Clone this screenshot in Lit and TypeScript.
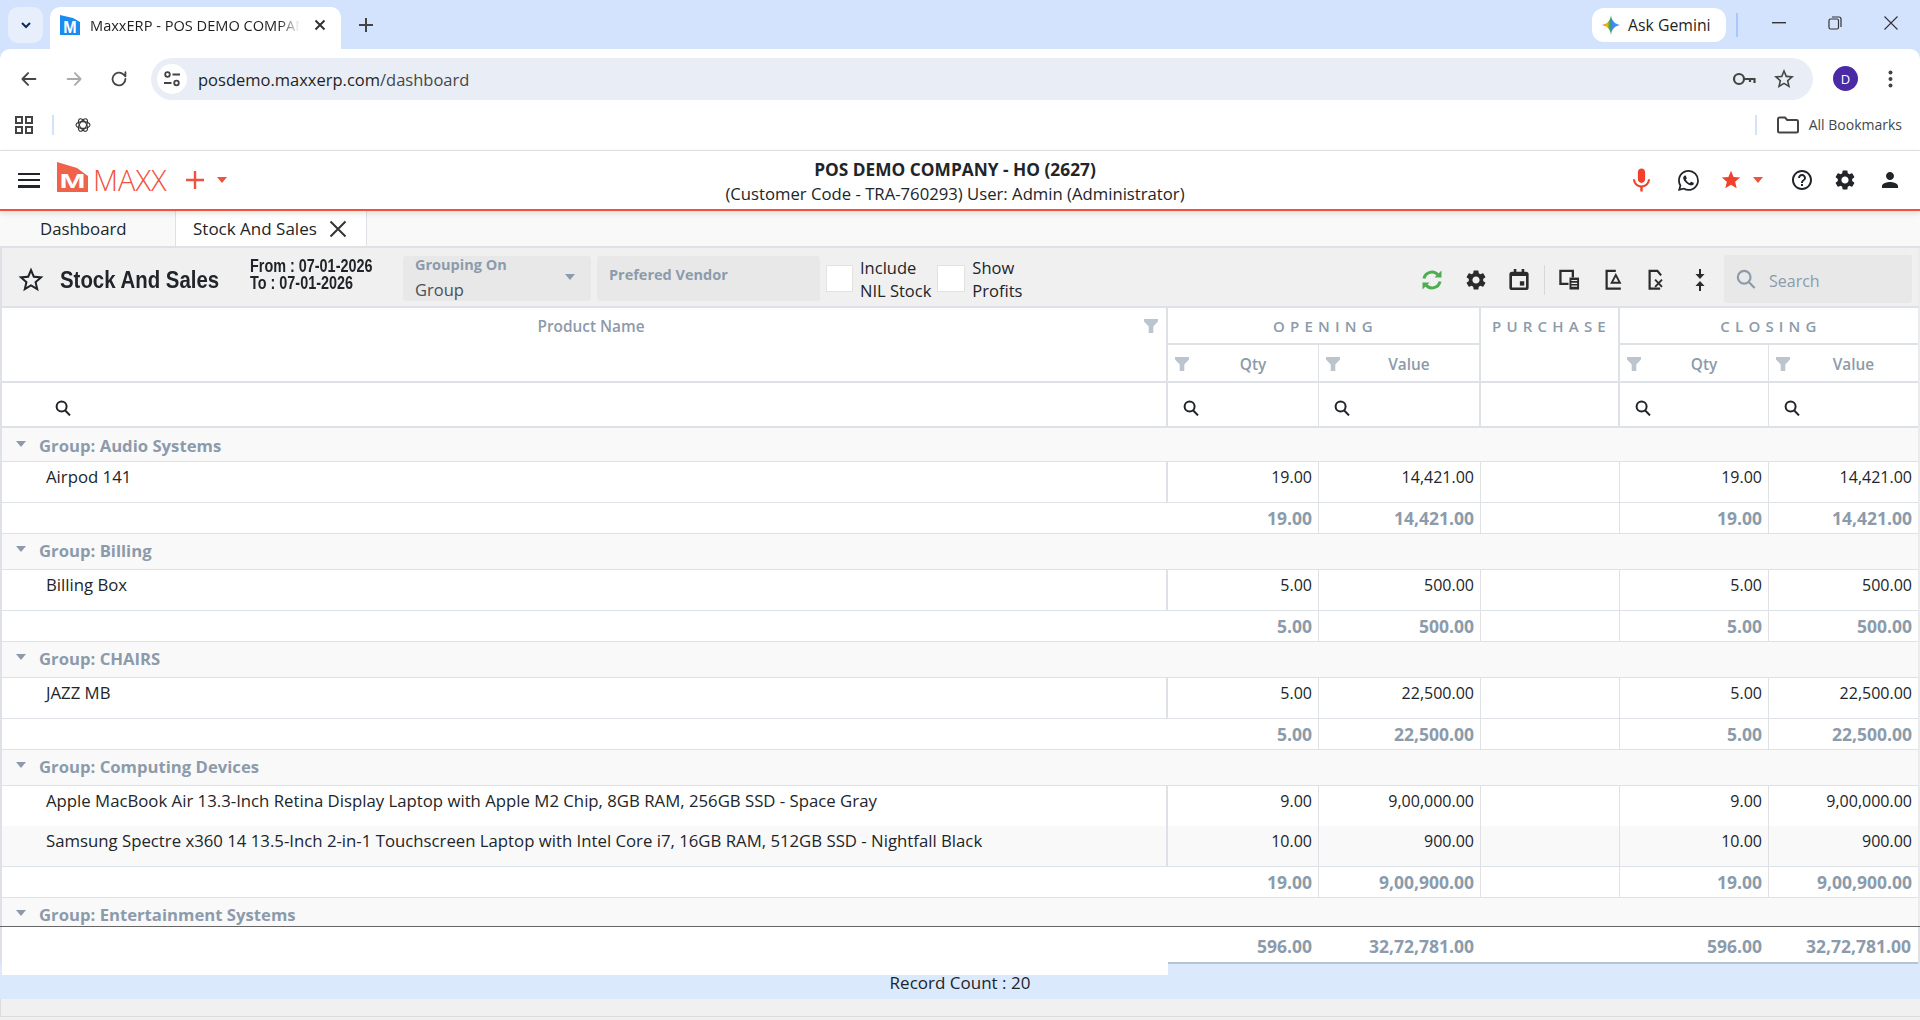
import { LitElement, html, css, svg } from "lit";
import { customElement } from "lit/decorators.js";

const P = {
  gear: "M19.14 12.94c.04-.3.06-.61.06-.94 0-.32-.02-.64-.07-.94l2.03-1.58c.18-.14.23-.41.12-.61l-1.92-3.32c-.12-.22-.37-.29-.59-.22l-2.39.96c-.5-.38-1.03-.7-1.62-.94l-.36-2.54c-.04-.24-.24-.41-.48-.41h-3.84c-.24 0-.43.17-.47.41l-.36 2.54c-.59.24-1.13.57-1.62.94l-2.39-.96c-.22-.08-.47 0-.59.22L2.74 8.87c-.12.21-.08.47.12.61l2.03 1.58c-.05.3-.09.63-.09.94s.02.64.07.94l-2.03 1.58c-.18.14-.23.41-.12.61l1.92 3.32c.12.22.37.29.59.22l2.39-.96c.5.38 1.03.7 1.62.94l.36 2.54c.05.24.24.41.48.41h3.84c.24 0 .44-.17.47-.41l.36-2.54c.59-.24 1.13-.56 1.62-.94l2.39.96c.22.08.47 0 .59-.22l1.92-3.32c.12-.22.07-.47-.12-.61l-2.01-1.58zM12 15.6c-1.98 0-3.6-1.62-3.6-3.6s1.62-3.6 3.6-3.6 3.6 1.62 3.6 3.6-1.62 3.6-3.6 3.6z",
  star: "M12 17.27L18.18 21l-1.64-7.03L22 9.24l-7.19-.61L12 2 9.19 8.63 2 9.24l5.46 4.73L5.82 21z",
  starO: "M22 9.24l-7.19-.62L12 2 9.19 8.63 2 9.24l5.46 4.73L5.82 21 12 17.27 18.18 21l-1.63-7.03L22 9.24zM12 15.4l-3.76 2.27 1-4.28-3.32-2.88 4.38-.38L12 6.1l1.71 4.04 4.38.38-3.32 2.88 1 4.28L12 15.4z",
  mic: "M12 14c1.66 0 2.99-1.34 2.99-3L15 5c0-1.66-1.34-3-3-3S9 3.34 9 5v6c0 1.66 1.34 3 3 3zm5.3-3c0 3-2.54 5.1-5.3 5.1S6.7 14 6.7 11H5c0 3.41 2.72 6.23 6 6.72V21h2v-3.28c3.28-.48 6-3.3 6-6.72h-1.7z",
  help: "M11 18h2v-2h-2v2zm1-16C6.48 2 2 6.48 2 12s4.48 10 10 10 10-4.48 10-10S17.52 2 12 2zm0 18c-4.41 0-8-3.59-8-8s3.59-8 8-8 8 3.59 8 8-3.59 8-8 8zm0-14c-2.21 0-4 1.79-4 4h2c0-1.1.9-2 2-2s2 .9 2 2c0 2-3 1.75-3 5h2c0-2.25 3-2.5 3-5 0-2.21-1.79-4-4-4z",
  person: "M12 12c2.21 0 4-1.79 4-4s-1.79-4-4-4-4 1.79-4 4 1.79 4 4 4zm0 2c-2.67 0-8 1.34-8 4v2h16v-2c0-2.66-5.33-4-8-4z",
  whatsapp: "M13.601 2.326A7.854 7.854 0 0 0 7.994 0C3.627 0 .068 3.558.064 7.926c0 1.399.366 2.76 1.057 3.965L0 16l4.204-1.102a7.933 7.933 0 0 0 3.79.965h.004c4.368 0 7.926-3.558 7.93-7.93A7.898 7.898 0 0 0 13.6 2.326zM7.994 14.521a6.573 6.573 0 0 1-3.356-.92l-.24-.144-2.494.654.666-2.433-.156-.251a6.56 6.56 0 0 1-1.007-3.505c0-3.626 2.957-6.584 6.591-6.584a6.56 6.56 0 0 1 4.66 1.931 6.557 6.557 0 0 1 1.928 4.66c-.004 3.639-2.961 6.592-6.592 6.592zm3.615-4.934c-.197-.099-1.17-.578-1.353-.646-.182-.065-.315-.099-.445.099-.133.197-.513.646-.627.775-.114.133-.232.148-.43.05-.197-.1-.836-.308-1.592-.985-.59-.525-.985-1.175-1.103-1.372-.114-.198-.011-.304.088-.403.087-.088.197-.232.296-.346.1-.114.133-.198.198-.33.065-.134.034-.248-.015-.347-.05-.099-.445-1.076-.612-1.47-.16-.389-.323-.335-.445-.34-.114-.007-.247-.007-.38-.007a.729.729 0 0 0-.529.247c-.182.198-.691.677-.691 1.654 0 .977.71 1.916.81 2.049.098.133 1.394 2.132 3.383 2.992.47.205.84.326 1.129.418.475.152.904.129 1.246.08.38-.058 1.171-.48 1.338-.943.164-.464.164-.86.114-.943-.049-.084-.182-.133-.38-.232z",
};

const icon = (d: string, size: number, color = "#212529", box = 24) =>
  html`<svg width=${size} height=${size} viewBox="0 0 ${box} ${box}"><path d=${d} fill=${color}></path></svg>`;

const arrow = (d: string, color: string) =>
  html`<svg width="22" height="22" viewBox="0 0 24 24" fill="none" stroke=${color} stroke-width="2" stroke-linecap="round" stroke-linejoin="round">${svg`<path d=${d}></path>`}</svg>`;

const funnel = html`<svg class="fn" width="14" height="14" viewBox="0 0 14 14"><path d="M0 0h14v2.5L9.3 7.5V14H4.7V7.5L0 2.5z" fill="#bcc5ce"></path></svg>`;
const lens = html`<svg width="16" height="16" viewBox="0 0 16 16" fill="none" stroke="#212529" stroke-width="2"><circle cx="6.6" cy="6.4" r="5"></circle><path d="M10 10.2l5 5.2"></path></svg>`;

type Item = { name: string; oq: string; ov: string };
type Group = { name: string; items: Item[]; sq: string; sv: string };

const GROUPS: Group[] = [
  { name: "Audio Systems", items: [{ name: "Airpod 141", oq: "19.00", ov: "14,421.00" }], sq: "19.00", sv: "14,421.00" },
  { name: "Billing", items: [{ name: "Billing Box", oq: "5.00", ov: "500.00" }], sq: "5.00", sv: "500.00" },
  { name: "CHAIRS", items: [{ name: "JAZZ MB", oq: "5.00", ov: "22,500.00" }], sq: "5.00", sv: "22,500.00" },
  {
    name: "Computing Devices",
    items: [
      { name: "Apple MacBook Air 13.3-Inch Retina Display Laptop with Apple M2 Chip, 8GB RAM, 256GB SSD - Space Gray", oq: "9.00", ov: "9,00,000.00" },
      { name: "Samsung Spectre x360 14 13.5-Inch 2-in-1 Touchscreen Laptop with Intel Core i7, 16GB RAM, 512GB SSD - Nightfall Black", oq: "10.00", ov: "900.00" },
    ],
    sq: "19.00",
    sv: "9,00,900.00",
  },
  { name: "Entertainment Systems", items: [], sq: "", sv: "" },
];

@customElement("app-root")
export class AppRoot extends LitElement {
  static styles = css`
    :host {
      display: block;
      width: 1920px;
      height: 1020px;
      overflow: hidden;
      background: #f0f0f0;
      font-family: "Open Sans", "Noto Sans", sans-serif;
      font-size: 16px;
      color: #212529;
    }
    svg { display: block; flex: none; }
    .center { display: flex; align-items: center; justify-content: center; flex: none; }
    .fill { flex: 1; }

    /* browser chrome */
    .chrome { background: #d3e3fd; }
    .strip { height: 49px; display: flex; align-items: flex-start; padding-top: 7px; box-sizing: border-box; }
    .tab-list { width: 35px; height: 36px; margin-left: 8px; border-radius: 10px; background: #e8effc; }
    .b-tab { width: 291px; height: 42px; margin-left: 7px; background: #fff; border-radius: 10px 10px 0 0; display: flex; align-items: center; padding: 0 0 6px 10px; box-sizing: border-box; }
    .b-tab .t { width: 210px; margin-left: 10px; font-size: 14.6px; white-space: nowrap; overflow: hidden; color: #1f1f1f; -webkit-mask-image: linear-gradient(90deg, #000 90%, transparent); mask-image: linear-gradient(90deg, #000 90%, transparent); }
    .b-tab .x { width: 20px; margin-left: 10px; }
    .new-tab { margin-left: 13px; width: 24px; height: 35px; }
    .gemini { width: 134px; height: 34px; margin-top: 1px; background: #fff; border-radius: 12px; display: flex; align-items: center; gap: 7px; padding-left: 9px; box-sizing: border-box; font-size: 15.8px; font-weight: 500; color: #1f1f1f; }
    .v-div { width: 2px; height: 24px; background: #a8c7fa; margin: 6px 0 0 10px; }
    .win { width: 56px; height: 32px; }
    .win.first { margin-left: 13px; }
    .win.last { margin-right: 1px; }

    .address { height: 51px; background: #fff; display: flex; align-items: flex-start; padding-top: 9px; box-sizing: border-box; border-radius: 10px 10px 0 0; }
    .nav { width: 45px; height: 42px; }
    .nav.first { margin-left: 6px; }
    .omni { flex: none; width: 1662px; height: 42px; margin-left: 10px; border-radius: 21px; background: #e9eef6; display: flex; align-items: center; box-sizing: border-box; padding-left: 6px; }
    .site { width: 30px; height: 30px; border-radius: 50%; background: #fff; }
    .url { margin-left: 11px; font-size: 16.5px; color: #1f1f1f; }
    .url i { font-style: normal; color: #444746; }
    .omni .act { width: 40px; }
    .omni .act.last { margin-right: 9px; }
    .avatar { width: 25px; height: 25px; border-radius: 50%; background: #4a2aa5; color: #fff; font-size: 13px; margin: 8px 0 0 20px; }
    .dots { margin: 12px 0 0 30px; }

    .bookmarks { background: #fff; border-bottom: 1px solid #e4e4e4; box-sizing: border-box; height: 51px; display: flex; align-items: center; }
    .bookmarks .apps { margin-left: 15px; }
    .bookmarks .sep { width: 2px; height: 20px; background: #d3e3fd; }
    .bookmarks .sep.a { margin-left: 19px; }
    .bookmarks .gpt { margin-left: 21px; }
    .bookmarks .folder { margin-left: 20px; }
    .bookmarks .all { font-size: 14px; color: #444746; margin: 0 18px 2px 10px; }

    /* app header */
    .head { height: 60px; box-sizing: border-box; background: #fff; display: grid; grid-template-columns: 1fr auto 1fr; align-items: center; padding-right: 10px; border-bottom: 2px solid #f0523d; position: relative; z-index: 1; box-shadow: 0 2px 6px rgba(0, 0, 0, .12); }
    .h-left, .h-icons { display: flex; align-items: center; }
    .burger { width: 22px; height: 15px; margin-left: 18px; display: flex; flex-direction: column; justify-content: space-between; }
    .burger b { display: block; height: 2.5px; background: #212529; }
    .logo { margin: 0 0 6px 17px; position: relative; width: 112px; height: 31px; display: flex; align-items: flex-end; }
    .logo svg { position: absolute; left: 0; top: 0; }
    .logo span { margin-left: 36px; font-size: 29px; line-height: 26px; font-weight: 300; color: #f0523d; }
    .plus { margin-left: 16px; }
    .caret { width: 0; height: 0; border: 5.5px solid transparent; border-top: 6px solid #f0523d; border-bottom: 0; }
    .caret.a { margin-left: 12px; }
    .titles { text-align: center; line-height: 24px; font-size: 16.7px; margin-top: 3px; }
    .titles b { display: block; font-weight: 700; font-size: 17.3px; }
    .h-icons { justify-content: flex-end; padding-right: 8px; }
    .h-icons .wa { margin-left: 22px; }
    .h-icons .st { margin-left: 21px; }
    .h-icons .caret { margin-left: 11px; }
    .h-icons .he { margin-left: 27px; }
    .h-icons .ge { margin-left: 19px; }
    .h-icons .us { margin-left: 21px; }

    /* tabs */
    .tabs { height: 37px; box-sizing: border-box; background: #f9f9f9; display: flex; border-bottom: 2px solid #dee2e6; }
    .tabs > div { display: flex; align-items: center; box-sizing: border-box; }
    .tab-a { width: 176px; padding-left: 40px; border-right: 1px solid #dee2e6; font-size: 16.8px; }
    .tab-b { width: 191px; padding-left: 17px; background: #fff; border-right: 1px solid #dee2e6; gap: 12px; font-size: 17px; }

    /* toolbar */
    .bar { height: 60px; box-sizing: border-box; padding-top: 3px; background: #f0f0f0; border-left: 2px solid #dee2e6; border-bottom: 2px solid #dee2e6; border-right: 2px solid #e9ecef; display: flex; align-items: center; }
    .bar .star { margin: 2px 0 0 14px; }
    .bar h1 { margin: 2px 0 0 14px; font: 700 24px/30px "Liberation Sans", sans-serif; transform: scaleX(.85); transform-origin: 0 50%; white-space: nowrap; width: 158px; }
    .dates { margin: -8px 0 0 32px; font: 700 18px/17px "Liberation Sans", sans-serif; transform: scaleX(.8); transform-origin: 0 50%; white-space: nowrap; width: 153px; }
    .field { height: 45px; background: #e8e8e8; border-radius: 3px; box-sizing: border-box; position: relative; padding: 0 12px; }
    .field.grp { width: 188px; }
    .field.ven { width: 223px; margin-left: 6px; padding-top: 10px; }
    .field label { display: block; font-weight: 700; font-size: 14.5px; line-height: 17px; color: #8c9bab; }
    .field span { display: block; font-size: 16.5px; line-height: 24px; margin-top: 5px; color: #495057; }
    .field .arrow { position: absolute; right: 16px; top: 18px; width: 0; height: 0; border: 5.5px solid transparent; border-top: 6px solid #8c9bab; border-bottom: 0; }
    .check { width: 27px; height: 27px; background: #fff; border: 1px solid #e2e2e2; box-sizing: border-box; margin-left: 6px; }
    .check.b { width: 28px; }
    .check-label { font-size: 16.5px; line-height: 23px; margin-left: 7px; }
    .tool { width: 43.5px; margin-top: 2px; }
    .tool-sep { width: 1px; height: 30px; margin: 2px 3px 0; background: #d8d8d8; }
    .box { width: 188px; height: 48px; margin: 0 6px 0 2px; background: #e8e8e8; border-radius: 3px; display: flex; align-items: center; padding-left: 12px; box-sizing: border-box; gap: 13px; color: #8c9bab; font-size: 16px; }
    .box em { font-style: normal; margin-top: 4px; }

    /* table */
    .table { border-left: 2px solid #dee2e6; border-right: 2px solid #e9ecef; background: #fff; }
    .cols { display: grid; grid-template-columns: 1166px 151px 162px 139px 149px 149px; }
    .thead { grid-template-rows: 37px 38px 45px; color: #8c9bab; font-weight: 600; font-size: 15.4px; border-bottom: 2px solid #dee2e6; box-sizing: border-box; height: 120px; }
    .thead > div { display: flex; align-items: center; justify-content: center; position: relative; box-sizing: border-box; border-right: 2px solid #dee2e6; border-bottom: 2px solid #dee2e6; }
    .thead .thin { border-right-width: 1px; }
    .thead .none { border-right: 0; }
    .thead .band { letter-spacing: 5.2px; font-size: 15px; padding-left: 4px; }
    .thead .wide { grid-column: span 2; }
    .thead .pn { grid-row: span 2; align-items: flex-start; padding: 8px 0 0 14px; }
    .thead .pn .fn { position: absolute; right: 8px; top: 11px; }
    .thead .sub { padding: 3px 0 0 20px; }
    .thead .sub .fn { position: absolute; left: 7px; top: 12px; }
    .thead .lens { justify-content: flex-start; border-bottom: 0; padding: 4px 0 0 15px; }
    .thead .lens.p { padding-left: 53px; }
    .thead .pu { grid-row: span 2; align-items: flex-start; padding-top: 8px; }
    .body { height: 498px; overflow: hidden; }
    .group { height: 36px; background: #f9f9f9; border-bottom: 1px solid #dee2e6; box-sizing: border-box; display: flex; align-items: center; padding: 0 0 2px 14px; gap: 13px; color: #8c9bab; font-weight: 700; font-size: 16.7px; }
    .group.first { height: 34px; padding: 1px 0 0 14px; }
    .group i { width: 0; height: 0; border: 5.5px solid transparent; border-top: 6px solid #8c9bab; border-bottom: 0; margin-bottom: 3px; }
    .row > div { height: 40px; box-sizing: border-box; padding: 0 6px; line-height: 30px; font-size: 16px; text-align: right; border-right: 1px solid #dee2e6; }
    .row > div:first-child { text-align: left; font-size: 16.76px; padding-left: 44px; border-right: 2px solid #dee2e6; }
    .row > div:last-child { border-right: 0; }
    .row.alt > div { background: #f9f9f9; }
    .row.end > div { height: 41px; border-bottom: 1px solid #dee2e6; }
    .sub-total > div { height: 31px; box-sizing: border-box; padding: 0 6px; line-height: 30px; font-size: 17.5px; text-align: right; font-weight: 700; color: #8c9bab; border-right: 1px solid #dee2e6; border-bottom: 1px solid #dee2e6; }
    .sub-total > div:first-child { grid-column: span 2; }
    .sub-total > div:last-child { border-right: 0; }
    .foot { display: grid; grid-template-columns: 2px 1166px 151px 162px 139px 149px 149px 2px; background: #dbe9fd; border-top: 1px solid #666; align-items: start; }
    .foot > div { height: 37px; background: #fff; box-sizing: border-box; border-bottom: 2px solid #b9c3cf; padding: 3px 7px 0; line-height: 32px; font-size: 17.5px; text-align: right; font-weight: 700; color: #8c9bab; }
    .foot > div.wide { height: 48px; border-bottom: 0; }
    .foot > div.edge { padding: 0; border: 0; background: #dee2e6; }
    .count { height: 24px; background: #dbe9fd; line-height: 16px; text-align: center; font-size: 17px; font-weight: 500; }
    .status { height: 17px; border-bottom: 1px solid #dcdcdc; border-left: 1px solid #dcdcdc; background: #f0f0f0; }
  `;

  private renderChrome() {
    return html`
      <div class="chrome">
        <div class="strip">
          <div class="tab-list center">
            <svg width="14" height="14" viewBox="0 0 14 14" fill="none" stroke="#0b2a5c" stroke-width="2"><path d="M3 5l4 4 4-4"></path></svg>
          </div>
          <div class="b-tab">
            <svg width="20" height="20" viewBox="0 0 20 20"><path d="M0 0 L13 3 L20 7 V20 H0z" fill="#1a8cef"></path><text x="10" y="18" text-anchor="middle" fill="#fff" font-family="Liberation Sans" font-weight="700" font-size="16">M</text></svg>
            <div class="t">MaxxERP - POS DEMO COMPANY - HO</div>
            <div class="x center">
              <svg width="12" height="12" viewBox="0 0 12 12" stroke="#333" stroke-width="2"><path d="M1.5 1.5l9 9M10.5 1.5l-9 9"></path></svg>
            </div>
          </div>
          <div class="new-tab center">
            <svg width="14" height="14" viewBox="0 0 14 14" stroke="#444" stroke-width="2"><path d="M7 0v14M0 7h14"></path></svg>
          </div>
          <div class="fill"></div>
          <div class="gemini">
            <svg width="20" height="22" viewBox="0 0 24 24">
              <defs><linearGradient id="gem" x1="0" y1="0" x2="1" y2="0"><stop offset="0" stop-color="#ea4335"></stop><stop offset=".3" stop-color="#fbbc04"></stop><stop offset=".45" stop-color="#34a853"></stop><stop offset=".55" stop-color="#4285f4"></stop><stop offset="1" stop-color="#3c9bff"></stop></linearGradient></defs>
              <path d="M12 0C12.6 7 17 11.4 24 12 17 12.6 12.6 17 12 24 11.4 17 7 12.6 0 12 7 11.4 11.4 7 12 0z" fill="url(#gem)"></path>
            </svg>
            Ask Gemini
          </div>
          <div class="v-div"></div>
          <div class="win first center"><svg width="14" height="2"><rect width="14" height="1.4" fill="#333"></rect></svg></div>
          <div class="win center">
            <svg width="14" height="14" viewBox="0 0 14 14" fill="none" stroke="#333" stroke-width="1.2"><rect x="1" y="3" width="9.5" height="10" rx="1.5"></rect><path d="M4 1h7a2 2 0 0 1 2 2v8"></path></svg>
          </div>
          <div class="win last center">
            <svg width="14" height="14" viewBox="0 0 14 14" stroke="#333" stroke-width="1.1"><path d="M.5.5l13 13M13.5.5l-13 13"></path></svg>
          </div>
        </div>
        <div class="address">
          <div class="nav first center">${arrow("M19 12H5M11 5.5L4.8 12l6.2 6.5", "#444746")}</div>
          <div class="nav center">${arrow("M5 12h14M13 5.5l6.2 6.5-6.2 6.5", "#a9abae")}</div>
          <div class="nav center">${arrow("M19 12a7 7 0 1 1-2.2-5.1L19 9V4.5", "#444746")}</div>
          <div class="omni">
            <div class="site center">
              <svg width="18" height="18" viewBox="0 0 18 18" fill="none" stroke="#444" stroke-width="1.8"><circle cx="4.5" cy="4.5" r="2.3"></circle><path d="M9.5 4.5H17M1 13h7.5"></path><circle cx="13.5" cy="13" r="2.3"></circle></svg>
            </div>
            <div class="url">posdemo.maxxerp.com<i>/dashboard</i></div>
            <div class="fill"></div>
            <div class="act center">
              <svg width="24" height="16" viewBox="0 0 24 16" fill="none" stroke="#444" stroke-width="2.2"><circle cx="7" cy="8" r="5"></circle><path d="M12 8h10.5v4M18 8v3"></path></svg>
            </div>
            <div class="act last center">${icon(P.starO, 24, "#444746")}</div>
          </div>
          <div class="avatar center">D</div>
          <div class="dots">
            <svg width="5" height="18" viewBox="0 0 5 18" fill="#444"><circle cx="2.5" cy="2.5" r="2"></circle><circle cx="2.5" cy="9" r="2"></circle><circle cx="2.5" cy="15.5" r="2"></circle></svg>
          </div>
        </div>
      </div>
      <div class="bookmarks">
        <div class="apps">
          <svg width="18" height="18" viewBox="0 0 18 18" fill="none" stroke="#444" stroke-width="2"><rect x="1" y="1" width="6" height="6"></rect><rect x="11" y="1" width="6" height="6"></rect><rect x="1" y="11" width="6" height="6"></rect><rect x="11" y="11" width="6" height="6"></rect></svg>
        </div>
        <div class="sep a"></div>
        <div class="gpt">
          <svg width="16" height="16" viewBox="0 0 16 16" fill="none" stroke="#333" stroke-width="1.1"><ellipse cx="8" cy="8" rx="7" ry="3.4"></ellipse><ellipse cx="8" cy="8" rx="7" ry="3.4" transform="rotate(60 8 8)"></ellipse><ellipse cx="8" cy="8" rx="7" ry="3.4" transform="rotate(120 8 8)"></ellipse></svg>
        </div>
        <div class="fill"></div>
        <div class="sep"></div>
        <div class="folder">
          <svg width="22" height="18" viewBox="0 0 22 18" fill="none" stroke="#444" stroke-width="2"><path d="M1 3a1.5 1.5 0 0 1 1.5-1.5H8l2.2 2.5H19.5A1.5 1.5 0 0 1 21 5.5V15a1.5 1.5 0 0 1-1.5 1.5h-17A1.5 1.5 0 0 1 1 15z"></path></svg>
        </div>
        <div class="all">All Bookmarks</div>
      </div>
    `;
  }

  private renderHeader() {
    return html`
      <div class="head">
        <div class="h-left">
          <div class="burger"><b></b><b></b><b></b></div>
          <div class="logo">
            <svg width="31" height="31" viewBox="0 0 31 31"><path d="M0 0L20 6 31 14V30H0z" fill="#f0624a"></path><text x="2.5" y="26" textLength="26" lengthAdjust="spacingAndGlyphs" fill="#fff" font-family="Liberation Sans" font-weight="700" font-size="20">M</text></svg>
            <span>MAXX</span>
          </div>
          <div class="plus">
            <svg width="20" height="20" viewBox="0 0 20 20" stroke="#f0523d" stroke-width="2.4"><path d="M10 1v18M1 10h18"></path></svg>
          </div>
          <div class="caret a"></div>
        </div>
        <div class="titles">
          <b>POS DEMO COMPANY - HO (2627)</b>
          (Customer Code - TRA-760293) User: Admin (Administrator)
        </div>
        <div class="h-icons">
          ${icon(P.mic, 29, "#f0412b")}
          <div class="wa">${icon(P.whatsapp, 21, "#212529", 16)}</div>
          <div class="st">${icon(P.star, 22, "#f0412b")}</div>
          <div class="caret"></div>
          <div class="he">${icon(P.help, 24)}</div>
          <div class="ge">${icon(P.gear, 24)}</div>
          <div class="us">${icon(P.person, 24)}</div>
        </div>
      </div>
      <div class="tabs">
        <div class="tab-a">Dashboard</div>
        <div class="tab-b">
          Stock And Sales
          <svg width="18" height="18" viewBox="0 0 18 18" stroke="#333" stroke-width="2"><path d="M1.5 1.5l15 15M16.5 1.5l-15 15"></path></svg>
        </div>
      </div>
    `;
  }

  private renderToolbar() {
    return html`
      <div class="bar">
        <div class="star">${icon(P.starO, 30)}</div>
        <h1>Stock And Sales</h1>
        <div class="dates">From : 07-01-2026<br />To : 07-01-2026</div>
        <div class="field grp"><label>Grouping On</label><span>Group</span><div class="arrow"></div></div>
        <div class="field ven"><label>Prefered Vendor</label></div>
        <div class="check"></div>
        <div class="check-label">Include<br />NIL Stock</div>
        <div class="check b"></div>
        <div class="check-label">Show<br />Profits</div>
        <div class="fill"></div>
        <div class="tool center">
          <svg width="22" height="22" viewBox="0 0 22 22" fill="none" stroke="#4cae4f" stroke-width="3"><path d="M3 9.5A8 8 0 0 1 17 6"></path><path d="M19 12.5A8 8 0 0 1 5 16"></path><path d="M20.5 1.5v7h-7z" fill="#4cae4f" stroke="none"></path><path d="M1.5 20.5v-7h7z" fill="#4cae4f" stroke="none"></path></svg>
        </div>
        <div class="tool center">${icon(P.gear, 24, "#2b2b2b")}</div>
        <div class="tool center">
          <svg width="20" height="21" viewBox="0 0 22 24"><path d="M5 0h3v3h6V0h3v3h2a3 3 0 0 1 3 3v15a3 3 0 0 1-3 3H3a3 3 0 0 1-3-3V6a3 3 0 0 1 3-3h2zM3 8v13h16V8z" fill="#2b2b2b"></path><rect x="12" y="14" width="5" height="5" fill="#2b2b2b"></rect></svg>
        </div>
        <div class="tool-sep"></div>
        <div class="tool center">
          <svg width="21" height="21" viewBox="0 0 22 22" fill="none" stroke="#2b2b2b" stroke-width="2.4"><path d="M10 15.5H1.5V2h13v7"></path><rect x="11" y="9" width="10" height="12.5" fill="#2b2b2b" stroke="none"></rect><path d="M13 12h6M13 15h6M13 18h6" stroke="#f0f0f0" stroke-width="1.2"></path></svg>
        </div>
        <div class="tool center">
          <svg width="17" height="22" viewBox="0 0 18 24" fill="none" stroke="#2b2b2b" stroke-width="2.4"><path d="M17 21.5H1.5V2h10"></path><path d="M11.5 6.5L16 15H7z" stroke-width="2"></path></svg>
        </div>
        <div class="tool center">
          <svg width="17" height="22" viewBox="0 0 18 24" fill="none" stroke="#2b2b2b" stroke-width="2.4"><path d="M13 21.5H1.5V2H10l4 5"></path><path d="M7.5 11.5l7.5 8M15 11.5l-7.5 8" stroke-width="2"></path></svg>
        </div>
        <div class="tool center">
          <svg width="12" height="22" viewBox="0 0 12 22" fill="#2b2b2b"><rect x="5" y="0" width="2" height="5"></rect><path d="M1.5 5h9L6 10z"></path><path d="M1.5 17h9L6 12z"></path><rect x="5" y="17" width="2" height="5"></rect></svg>
        </div>
        <div class="box">
          <svg width="20" height="20" viewBox="0 0 22 22" fill="none" stroke="#8c9bab" stroke-width="2.4"><circle cx="9" cy="9" r="7"></circle><path d="M14 14.4l6.5 6.6"></path></svg>
          <em>Search</em>
        </div>
      </div>
    `;
  }

  private renderHead() {
    return html`
      <div class="cols thead">
        <div class="pn">Product Name${funnel}</div>
        <div class="band wide">OPENING</div>
        <div class="band pu">PURCHASE</div>
        <div class="band none wide">CLOSING</div>
        <div class="sub thin">${funnel}Qty</div>
        <div class="sub">${funnel}Value</div>
        <div class="sub thin">${funnel}Qty</div>
        <div class="sub none">${funnel}Value</div>
        <div class="lens p">${lens}</div>
        <div class="lens thin">${lens}</div>
        <div class="lens">${lens}</div>
        <div class="lens"></div>
        <div class="lens thin">${lens}</div>
        <div class="lens none">${lens}</div>
      </div>
    `;
  }

  private renderGroup(g: Group, i: number) {
    return html`
      <div class="group ${i === 0 ? "first" : ""}"><i></i>Group: ${g.name}</div>
      ${g.items.map(
        (it, j) => html`
          <div class="cols row ${j === 1 ? "alt" : ""} ${j === g.items.length - 1 ? "end" : ""}">
            <div>${it.name}</div>
            <div>${it.oq}</div>
            <div>${it.ov}</div>
            <div></div>
            <div>${it.oq}</div>
            <div>${it.ov}</div>
          </div>
        `,
      )}
      ${g.sq
        ? html`<div class="cols sub-total">
            <div>${g.sq}</div>
            <div>${g.sv}</div>
            <div></div>
            <div>${g.sq}</div>
            <div>${g.sv}</div>
          </div>`
        : ""}
    `;
  }

  render() {
    return html`
      ${this.renderChrome()}
      ${this.renderHeader()}
      ${this.renderToolbar()}
      <div class="table">
        ${this.renderHead()}
        <div class="body">${GROUPS.map((g, i) => this.renderGroup(g, i))}</div>
      </div>
      <div class="foot">
        <div class="edge"></div>
        <div class="wide"></div>
        <div>596.00</div>
        <div>32,72,781.00</div>
        <div></div>
        <div>596.00</div>
        <div>32,72,781.00</div>
        <div class="edge"></div>
      </div>
      <div class="count">Record Count : 20</div>
      <div class="status"></div>
    `;
  }
}
